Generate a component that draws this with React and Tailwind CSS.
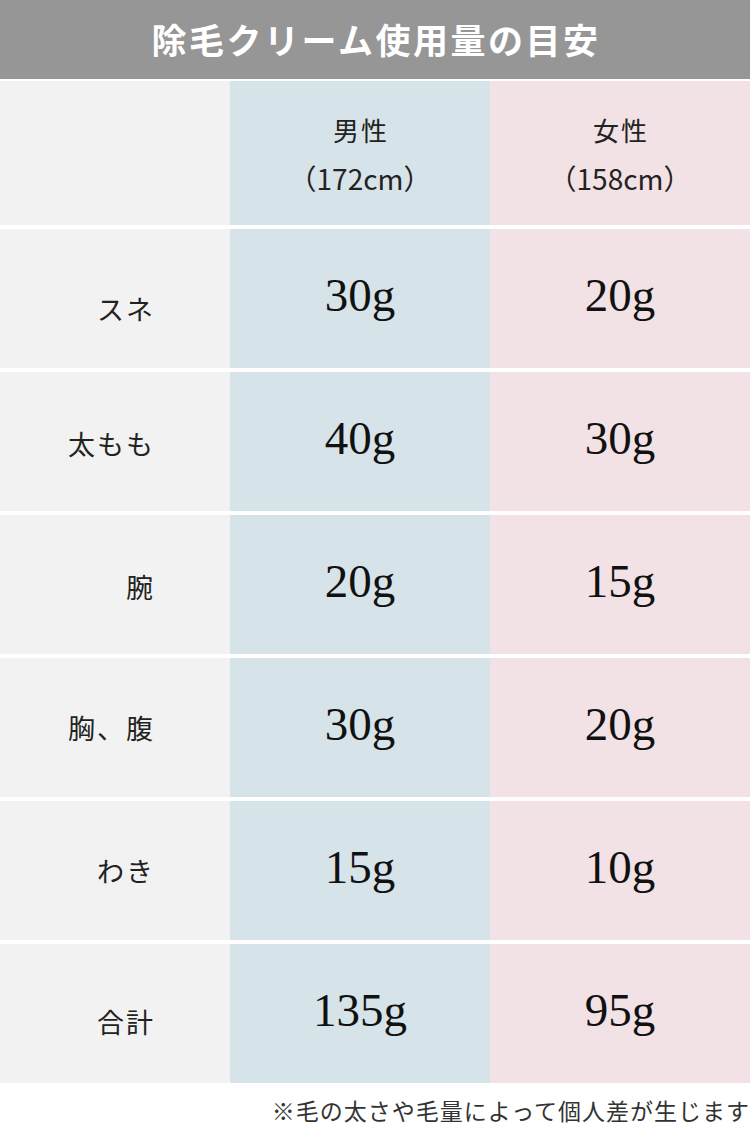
import React from "react";

const rows = [
  { label: "スネ", m: "30g", f: "20g", off: "pt-5" },
  { label: "太もも", m: "40g", f: "30g", off: "pt-1" },
  { label: "腕", m: "20g", f: "15g", off: "pt-1" },
  { label: "胸、腹", m: "30g", f: "20g", off: "pt-0" },
  { label: "わき", m: "15g", f: "10g", off: "pt-0" },
  { label: "合計", m: "135g", f: "95g", off: "pt-4" },
];

const jp = "font-['Noto_Sans_CJK_JP','Noto_Sans',sans-serif]";
const serif = "font-['Liberation_Serif','Noto_Sans_CJK_JP',serif]";

export default function App() {
  return (
    <div className={`w-[750px] h-[1126px] bg-white ${jp} overflow-hidden`}>
      <div className="h-[79px] bg-[#969696] flex items-center justify-center pb-[2px]">
        <h1 className="text-white font-bold text-[35px] tracking-[2.5px] leading-none pl-[2px]">
          除毛クリーム使用量の目安
        </h1>
      </div>
      <div className="mt-[2px] grid grid-cols-[230px_260px_260px] h-[144px]">
        <div className="bg-[#f2f2f2]" />
        <div className="bg-[#d6e3e8] flex flex-col items-center justify-center text-[#222] pt-[1px]">
          <div className="text-[26px] leading-[49px] tracking-[2px] pl-[2px]">男性</div>
          <div className="text-[28px] leading-[49px]">（172cm）</div>
        </div>
        <div className="bg-[#f2e1e5] flex flex-col items-center justify-center text-[#222] pt-[1px]">
          <div className="text-[26px] leading-[49px] tracking-[2px] pl-[2px]">女性</div>
          <div className="text-[28px] leading-[49px]">（158cm）</div>
        </div>
      </div>
      {rows.map((r) => (
        <div key={r.label} className="mt-[4px] grid grid-cols-[230px_260px_260px] h-[139px]">
          <div className={`bg-[#f2f2f2] flex items-center justify-end pr-[75px] ${r.off}`}>
            <span className="text-[27px] tracking-[2px] text-[#222] leading-none">{r.label}</span>
          </div>
          <div className="bg-[#d6e3e8] flex items-center justify-center">
            <span className={`${serif} text-[47px] leading-none text-[#111] pb-[6px]`}>{r.m}</span>
          </div>
          <div className="bg-[#f2e1e5] flex items-center justify-center">
            <span className={`${serif} text-[47px] leading-none text-[#111] pb-[6px]`}>{r.f}</span>
          </div>
        </div>
      ))}
      <div className="pt-[16px] text-right">
        <span className="text-[23px] tracking-[1px] text-[#333] leading-none">
          ※毛の太さや毛量によって個人差が生じます
        </span>
      </div>
    </div>
  );
}
